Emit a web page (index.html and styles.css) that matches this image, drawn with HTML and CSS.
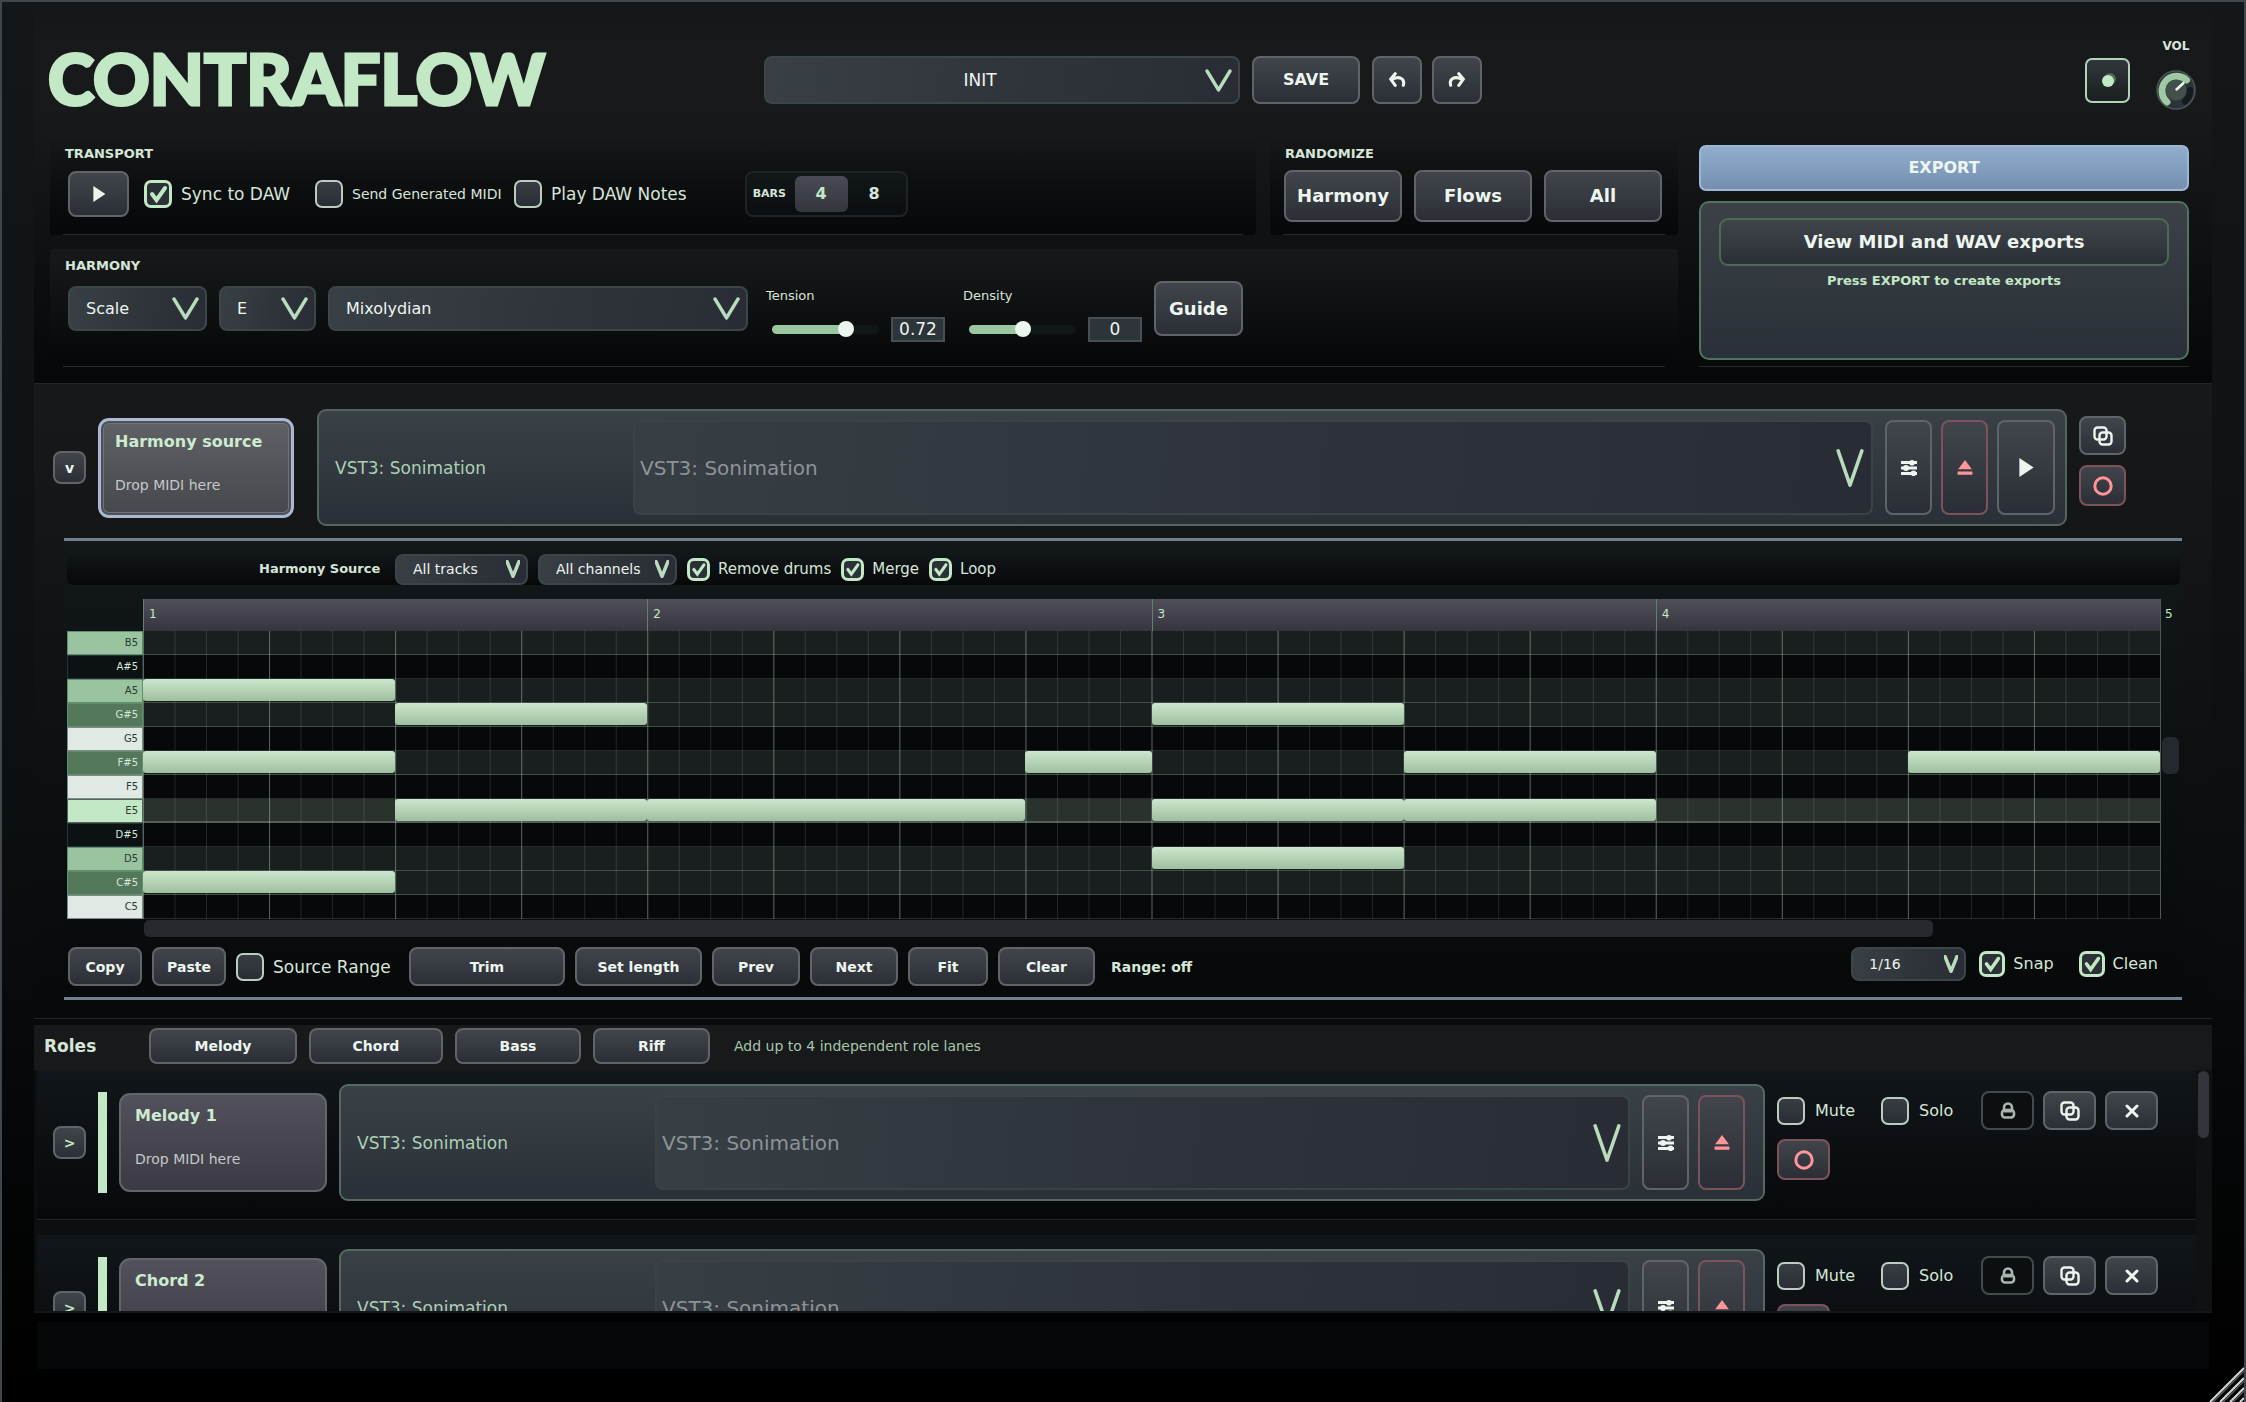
FILE: index.html
```html
<!DOCTYPE html>
<html lang="en">
<head>
<meta charset="utf-8">
<title>Contraflow</title>
<link rel="stylesheet" href="styles.css">
</head>
<body>
<svg class="sprite" aria-hidden="true">
  <symbol id="chevron" viewBox="0 0 26 22" preserveAspectRatio="none"><path d="M2 2L13 20L24 2" fill="none" stroke="#b9dcbd" stroke-width="3.500" stroke-linecap="round" stroke-linejoin="round" vector-effect="non-scaling-stroke"/></symbol>
  <symbol id="play" viewBox="0 0 20 20"><path d="M3 0L18 10L3 20Z" fill="#edf5ef"/></symbol>
  <symbol id="undo" viewBox="0 0 20 20"><path d="M17 16C19 9 13 5 5 9M8 3L3 9L8 16" fill="none" stroke="#edf5ef" stroke-width="3.400" stroke-linecap="round"/></symbol>
  <symbol id="redo" viewBox="0 0 20 20"><path d="M3 16C1 9 7 5 15 9M12 3L17 9L12 16" fill="none" stroke="#edf5ef" stroke-width="3.400" stroke-linecap="round"/></symbol>
  <symbol id="sliders" viewBox="0 0 16 16"><g fill="#edf5ef"><path d="M0 1h16v3H0zM0 6.500h16v3H0zM0 12h16v3H0z"/><circle cx="11" cy="2.800" r="2.800"/><circle cx="5" cy="8" r="3"/><circle cx="12.500" cy="13.200" r="2.800"/></g></symbol>
  <symbol id="eject" viewBox="0 0 14 14"><path d="M7 0L13 8H1ZM0.500 10h13v3H0.500z" fill="#ff9499"/></symbol>
  <symbol id="copy" viewBox="0 0 20 20"><g fill="none" stroke="#edf5ef" stroke-width="2.400"><rect x="1.500" y="1.500" width="12" height="12" rx="3"/><rect x="6.500" y="6.500" width="12" height="12" rx="3"/></g></symbol>
  <symbol id="record" viewBox="0 0 20 20"><circle cx="10" cy="10" r="8.200" fill="none" stroke="#ff9499" stroke-width="3"/></symbol>
  <symbol id="lock" viewBox="0 0 16 18"><g fill="none" stroke="#a9b7ae" stroke-width="2.600"><path d="M4 8V5.500a4 4 0 0 1 8 0V8"/><rect x="2" y="8" width="12" height="7.500" rx="3"/></g><path d="M4 9h8" stroke="#a9b7ae" stroke-width="3"/></symbol>
  <symbol id="close" viewBox="0 0 14 14"><path d="M2 2L12 12M12 2L2 12" stroke="#edf5ef" stroke-width="3" stroke-linecap="round"/></symbol>
</svg>

<div class="app">
  <header class="top">
    <div class="topbar">
      <h1 class="logo">CONTRAFLOW</h1>
      <div class="presets">
        <div class="select select-preset"><select aria-label="Preset"><option>INIT</option></select><svg><use href="#chevron"/></svg></div>
        <button class="btn btn-save">SAVE</button>
        <button class="btn btn-history" aria-label="Undo"><svg><use href="#undo"/></svg></button>
        <button class="btn btn-history" aria-label="Redo"><svg><use href="#redo"/></svg></button>
      </div>
      <div class="output">
        <button class="activity" aria-label="MIDI activity"><span></span></button>
        <div class="volume">
          <span>VOL</span>
          <svg viewBox="0 0 40 40" role="img" aria-label="Volume">
            <circle cx="20" cy="20" r="19" fill="#2b3238" stroke="#4b5659" stroke-width="1.500"/>
            <path d="M11 32A14.500 14.500 0 1 1 30.500 10" fill="none" stroke="#9ecaa3" stroke-width="7" stroke-linecap="round"/>
            <path d="M29 31.500A14.500 14.500 0 0 0 34 20" fill="none" stroke="#121b1d" stroke-width="6" stroke-linecap="round"/>
            <circle cx="20" cy="20" r="10.500" fill="#41504b"/>
            <path d="M20.500 19.500L27.500 13" stroke="#edf5ef" stroke-width="2.500" stroke-linecap="round"/>
          </svg>
        </div>
      </div>
    </div>

    <div class="deck">
      <section class="panel transport">
        <h2>TRANSPORT</h2>
        <div class="row">
          <button class="btn btn-play" aria-label="Play"><svg><use href="#play"/></svg></button>
          <label class="check check-sync"><input type="checkbox" checked>Sync to DAW</label>
          <label class="check check-send"><input type="checkbox"><span class="small">Send Generated MIDI</span></label>
          <label class="check"><input type="checkbox">Play DAW Notes</label>
          <div class="bars"><span>BARS</span><button class="on">4</button><button>8</button></div>
        </div>
      </section>
      <section class="panel randomize">
        <h2>RANDOMIZE</h2>
        <div class="row">
          <button class="btn btn-big">Harmony</button>
          <button class="btn btn-big">Flows</button>
          <button class="btn btn-big">All</button>
        </div>
      </section>
      <section class="panel harmony">
        <h2>HARMONY</h2>
        <div class="row">
          <div class="select select-mode"><select aria-label="Mode"><option>Scale</option></select><svg><use href="#chevron"/></svg></div>
          <div class="select select-key"><select aria-label="Key"><option>E</option></select><svg><use href="#chevron"/></svg></div>
          <div class="select select-scale"><select aria-label="Scale"><option>Mixolydian</option></select><svg><use href="#chevron"/></svg></div>
          <div class="dial"><label for="tension">Tension</label><div><input id="tension" class="tension" type="range" min="0" max="1" step="0.01" value="0.72"><input type="text" aria-label="Tension value" value="0.72"></div></div>
          <div class="dial"><label for="density">Density</label><div><input id="density" class="density" type="range" min="-1" max="1" step="0.01" value="0"><input type="text" aria-label="Density value" value="0"></div></div>
          <button class="btn btn-guide">Guide</button>
        </div>
      </section>
      <section class="export">
        <button class="btn-export">EXPORT</button>
        <div class="export-box">
          <button class="btn btn-view">View MIDI and WAV exports</button>
          <p>Press EXPORT to create exports</p>
        </div>
      </section>
    </div>
  </header>

  <section class="source">
    <div class="source-row">
      <button class="btn btn-expand" aria-label="Collapse">v</button>
      <div class="card card-active"><h3>Harmony source</h3><p>Drop MIDI here</p></div>
      <div class="plugin">
        <span class="plugin-name">VST3: Sonimation</span>
        <div class="select select-plugin"><select aria-label="Harmony plugin"><option>VST3: Sonimation</option></select><svg><use href="#chevron"/></svg></div>
        <button class="btn btn-tall" aria-label="Plugin settings"><svg><use href="#sliders"/></svg></button>
        <button class="btn btn-tall btn-red" aria-label="Eject"><svg><use href="#eject"/></svg></button>
        <button class="btn btn-tall btn-preview" aria-label="Preview"><svg><use href="#play"/></svg></button>
      </div>
      <div class="source-actions">
        <button class="btn" aria-label="Duplicate"><svg><use href="#copy"/></svg></button>
        <button class="btn btn-red" aria-label="Record"><svg><use href="#record"/></svg></button>
      </div>
    </div>

    <div class="editor">
      <div class="filters">
        <strong>Harmony Source</strong>
        <div class="select select-tracks"><select aria-label="Tracks"><option>All tracks</option></select><svg><use href="#chevron"/></svg></div>
        <div class="select select-channels"><select aria-label="Channels"><option>All channels</option></select><svg><use href="#chevron"/></svg></div>
        <label class="check"><input type="checkbox" checked>Remove drums</label>
        <label class="check"><input type="checkbox" checked>Merge</label>
        <label class="check"><input type="checkbox" checked>Loop</label>
      </div>

      <div class="roll">
        <div class="ruler"><span>1</span><span>2</span><span>3</span><span>4</span></div>
        <span class="ruler-end">5</span>
        <ol class="keys">
          <li class="scale">B5</li><li class="black">A#5</li><li class="scale">A5</li><li class="sharp">G#5</li>
          <li>G5</li><li class="sharp">F#5</li><li>F5</li><li class="root">E5</li>
          <li class="black">D#5</li><li class="scale">D5</li><li class="sharp">C#5</li><li>C5</li>
        </ol>
        <div class="lanes-bg">
          <i class="in"></i><i></i><i class="in"></i><i class="in"></i><i></i><i class="in"></i><i></i><i class="tonic"></i><i></i><i class="in"></i><i class="in"></i><i></i>
        </div>
        <div class="notes">
          <b style="grid-area:3/1/4/9"></b>
          <b style="grid-area:6/1/7/9"></b>
          <b style="grid-area:11/1/12/9"></b>
          <b style="grid-area:4/9/5/17"></b>
          <b style="grid-area:8/9/9/17"></b>
          <b style="grid-area:8/17/9/29"></b>
          <b style="grid-area:6/29/7/33"></b>
          <b style="grid-area:4/33/5/41"></b>
          <b style="grid-area:8/33/9/41"></b>
          <b style="grid-area:10/33/11/41"></b>
          <b style="grid-area:6/41/7/49"></b>
          <b style="grid-area:8/41/9/49"></b>
          <b style="grid-area:6/57/7/65"></b>
        </div>
        <div class="vscroll"><span></span></div>
        <div class="hscroll"><span></span></div>
      </div>

      <div class="tools">
        <button class="btn btn-copy">Copy</button>
        <button class="btn btn-copy">Paste</button>
        <label class="check check-range"><input type="checkbox">Source Range</label>
        <button class="btn btn-trim">Trim</button>
        <button class="btn btn-length">Set length</button>
        <button class="btn btn-step">Prev</button>
        <button class="btn btn-step">Next</button>
        <button class="btn btn-fit">Fit</button>
        <button class="btn btn-clear">Clear</button>
        <strong>Range: off</strong>
        <div class="snap">
          <div class="select select-grid"><select aria-label="Grid"><option>1/16</option></select><svg><use href="#chevron"/></svg></div>
          <label class="check"><input type="checkbox" checked>Snap</label>
          <label class="check"><input type="checkbox" checked>Clean</label>
        </div>
      </div>
    </div>
  </section>

  <section class="roles">
    <div class="roles-head">
      <h2>Roles</h2>
      <button class="btn btn-melody">Melody</button>
      <button class="btn btn-chord">Chord</button>
      <button class="btn btn-bass">Bass</button>
      <button class="btn btn-riff">Riff</button>
      <p>Add up to 4 independent role lanes</p>
    </div>
    <div class="roles-body">
      <div class="lanes">
        <article class="lane">
          <button class="btn btn-expand" aria-label="Expand">&gt;</button>
          <span class="stripe"></span>
          <div class="card"><h3>Melody 1</h3><p>Drop MIDI here</p></div>
          <div class="plugin">
            <span class="plugin-name">VST3: Sonimation</span>
            <div class="select select-plugin"><select aria-label="Melody plugin"><option>VST3: Sonimation</option></select><svg><use href="#chevron"/></svg></div>
            <button class="btn btn-tall" aria-label="Plugin settings"><svg><use href="#sliders"/></svg></button>
            <button class="btn btn-tall btn-red" aria-label="Eject"><svg><use href="#eject"/></svg></button>
          </div>
          <div class="lane-actions">
            <label class="check"><input type="checkbox">Mute</label>
            <label class="check"><input type="checkbox">Solo</label>
            <button class="btn btn-lock" aria-label="Lock"><svg><use href="#lock"/></svg></button>
            <button class="btn" aria-label="Duplicate"><svg><use href="#copy"/></svg></button>
            <button class="btn" aria-label="Remove"><svg class="x"><use href="#close"/></svg></button>
            <button class="btn btn-red btn-record" aria-label="Record"><svg><use href="#record"/></svg></button>
          </div>
        </article>
        <article class="lane">
          <button class="btn btn-expand" aria-label="Expand">&gt;</button>
          <span class="stripe"></span>
          <div class="card"><h3>Chord 2</h3></div>
          <div class="plugin">
            <span class="plugin-name">VST3: Sonimation</span>
            <div class="select select-plugin"><select aria-label="Chord plugin"><option>VST3: Sonimation</option></select><svg><use href="#chevron"/></svg></div>
            <button class="btn btn-tall" aria-label="Plugin settings"><svg><use href="#sliders"/></svg></button>
            <button class="btn btn-tall btn-red" aria-label="Eject"><svg><use href="#eject"/></svg></button>
          </div>
          <div class="lane-actions">
            <label class="check"><input type="checkbox">Mute</label>
            <label class="check"><input type="checkbox">Solo</label>
            <button class="btn btn-lock" aria-label="Lock"><svg><use href="#lock"/></svg></button>
            <button class="btn" aria-label="Duplicate"><svg><use href="#copy"/></svg></button>
            <button class="btn" aria-label="Remove"><svg class="x"><use href="#close"/></svg></button>
            <button class="btn btn-red btn-record" aria-label="Record"><svg><use href="#record"/></svg></button>
          </div>
        </article>
      </div>
      <div class="lane-scroll"><span></span></div>
    </div>
  </section>
  <footer class="status"></footer>
  <svg class="grip" viewBox="0 0 36 36" aria-hidden="true"><path d="M2 36L36 2M12 36L36 12M22 36L36 22M32 36L36 32" stroke="#d5d8d8" stroke-width="2"/><path d="M4 37L37 4M14 37L37 14M24 37L37 24" stroke="#5a5d5e" stroke-width="1.500"/></svg>
</div>
</body>
</html>
```
FILE: styles.css
```css
* { box-sizing: border-box; }

:root {
  --text: #edf5ef;
  --soft: #d5e6d8;
  --mint: #c3e8c5;
  --btn: linear-gradient(#42464c, #2a2d35);
}

body {
  margin: 0;
  background: #000;
  color: var(--soft);
  font: 16px/20px "DejaVu Sans", Verdana, sans-serif;
}

h1, h2, h3, p, ol { margin: 0; padding: 0; }
button, input, select { font: inherit; color: inherit; margin: 0; }
.sprite { display: none; }

.app {
  position: relative;
  display: flex;
  flex-direction: column;
  height: 100vh;
  min-height: 1200px;
  padding: 0 32px;
  overflow: hidden;
  border: 2px solid #3d474d;
  border-bottom: 0;
  background: linear-gradient(#141719, #0d1012 55%, #000 98%);
}

/* Buttons */
.btn {
  display: flex;
  flex: none;
  align-items: center;
  justify-content: center;
  padding: 0;
  border: 2px solid #5f6468;
  border-radius: 8px;
  background: var(--btn) border-box;
  color: var(--text);
  font-size: 14px;
  font-weight: bold;
}
.btn svg { width: 20px; height: 20px; }
.btn-red { border-color: #7c535b; }

/* Drop-downs: the arrow shares the select's grid cell */
.select { display: grid; flex: none; }
.select > * { grid-area: 1 / 1; }
.select select {
  width: 100%;
  height: 100%;
  padding: 0 16px;
  appearance: none;
  border: 2px solid #3b4649;
  border-radius: 8px;
  background: linear-gradient(100deg, #394045, #2f343b 55%, #292c34) border-box;
  color: var(--text);
}
.select svg {
  align-self: center;
  justify-self: end;
  width: 27px;
  height: 23px;
  margin-right: 8px;
  pointer-events: none;
}

/* Tick boxes */
.check { display: flex; align-items: center; gap: 10px; color: var(--soft); white-space: nowrap; }
.check input {
  width: 28px;
  height: 28px;
  flex: none;
  appearance: none;
  border: 2px solid #bacdc0;
  border-radius: 7px;
  background: linear-gradient(#383d44, #2a2d35);
}
.check input:checked {
  border: 3px solid var(--mint);
  background: url("data:image/svg+xml,%3Csvg xmlns='http://www.w3.org/2000/svg' viewBox='0 0 22 22'%3E%3Cpath d='M5 11l4.500 6L18 5' fill='none' stroke='%23c3e8c5' stroke-width='4' stroke-linecap='round'/%3E%3C/svg%3E") center / 100% no-repeat, #2c3138;
}

/* Header */
.top {
  flex: none;
  padding: 0 23px 16px 16px;
  background: linear-gradient(#141719, #17191b 10%, #17191b 30%, #060709);
  border-bottom: 1px solid #222628;
}
.topbar {
  display: grid;
  grid-template-columns: 1fr auto 1fr;
  align-items: start;
  height: 135px;
  margin-right: -7px;
}
.logo {
  margin: 36px 0 0 -2px;
  color: var(--mint);
  font: 900 70px/80px Lato, sans-serif;
  -webkit-text-stroke: 3px var(--mint);
}
.presets { display: flex; gap: 12px; padding-top: 54px; }
.select-preset { width: 476px; height: 48px; }
.select-preset select { padding-right: 60px; font-size: 17px; text-align-last: center; }
.btn-save { width: 108px; font-size: 16px; }
.btn-history { width: 50px; }
.btn-history + .btn-history { margin-left: -2px; }
.btn-history svg { width: 18px; height: 18px; }

.output { display: flex; justify-content: flex-end; gap: 26px; padding-top: 34px; }
.activity {
  display: grid;
  place-items: center;
  width: 45px;
  height: 45px;
  margin-top: 22px;
  border: 2px solid #b3d2b7;
  border-radius: 7px;
  background: linear-gradient(#30363a, #1a2021);
}
.activity span { width: 12px; height: 12px; border-radius: 50%; background: var(--mint); box-shadow: 2px -2px 0 #56655b; }
.volume { display: flex; flex-direction: column; align-items: center; gap: 14px; font-size: 12px; font-weight: bold; line-height: 20px; }
.volume svg { width: 40px; height: 40px; }

.deck {
  display: grid;
  grid-template-columns: 1fr 408px 497px;
  gap: 14px;
}
.panel { border-radius: 4px; padding: 9px 13px 0; }
.panel::after, .export::after { content: ""; display: block; height: 1px; background: #272b2d; margin-top: auto; }
.panel h2 { margin-left: 2px; font-size: 13px; line-height: 16px; color: var(--soft); }
.panel, .export { display: flex; flex-direction: column; }
.row { display: flex; align-items: flex-start; }
.transport, .randomize { height: 98px; background: linear-gradient(#0e101100, #07080a); }
.transport .row { margin-top: 9px; }
.randomize .row { margin-top: 8px; }
.harmony { grid-column: 1 / 3; height: 118px; background: linear-gradient(#17191b, #060709); }
.export { grid-area: 1 / 3 / 3 / 4; margin-left: 7px; padding-top: 8px; }

.transport .row { align-items: center; height: 46px; padding-left: 5px; }
.transport .check { height: 46px; gap: 9px; font-size: 17px; }
.btn-play { width: 61px; height: 46px; margin-right: 15px; }
.btn-play svg { width: 16px; height: 16px; }
.check-sync { width: 171px; }
.check-send { width: 199px; }
.transport .small { font-size: 14px; }
.bars {
  display: flex;
  align-items: center;
  height: 46px;
  width: 163px;
  margin-left: 58px;
  padding: 0 5px 0 6px;
  border: 2px solid #1d2427;
  border-radius: 8px;
  background: linear-gradient(#12171a, #0b0e11);
  font-size: 11px;
  font-weight: bold;
}
.bars span { flex: 1; }
.bars button { width: 53px; height: 36px; padding: 0; border: 0; border-radius: 6px; background: none; font-size: 16px; }
.bars .on { background: linear-gradient(#484a54, #34363e); color: var(--mint); }

.randomize .row { gap: 12px; padding-left: 1px; }
.btn-big { width: 118px; height: 52px; font-size: 18px; }

.harmony .row { align-items: center; height: 65px; margin-top: 2px; padding-left: 5px; gap: 12px; }
.select-mode, .select-key, .select-scale { height: 45px; }
.select-mode { width: 139px; }
.select-key { width: 97px; }
.select-scale { width: 420px; }
.dial { width: 185px; padding: 12px 0 0 6px; font-size: 13px; line-height: 16px; }
.dial div { display: flex; align-items: center; justify-content: space-between; margin-top: 13px; padding-left: 6px; }
.dial input[type="text"] { width: 54px; height: 25px; padding: 0; border: 2px solid #465054; background: #2d343a; color: var(--text); font-size: 17px; text-align: center; }
.dial input[type="range"] { width: 107px; height: 17px; appearance: none; background: none; }
.dial input::-webkit-slider-runnable-track { height: 9px; border-radius: 5px; }
.tension::-webkit-slider-runnable-track { background: linear-gradient(90deg, #9ac79f 70%, #101718 70%); }
.density::-webkit-slider-runnable-track { background: linear-gradient(90deg, #9ac79f 50%, #101718 50%); }
.dial input::-webkit-slider-thumb { width: 16px; height: 16px; margin-top: -4px; appearance: none; border-radius: 50%; background: var(--text); }
.btn-guide { width: 89px; height: 55px; font-size: 18px; }

.btn-export { height: 46px; padding: 0; border: 2px solid #9db7d3; border-radius: 7px; background: linear-gradient(#93afd0, #728dac) border-box; color: var(--text); font-weight: bold; }
.export-box {
  height: 159px;
  margin-top: 10px;
  padding: 15px 18px;
  border: 2px solid #52745d;
  border-radius: 10px;
  background: linear-gradient(#3b4147, #2a3037);
  text-align: center;
}
.btn-view { width: 100%; height: 48px; border-color: #4a6a55; border-radius: 9px; font-size: 18px; }
.export-box p { margin-top: 7px; color: var(--mint); font-size: 13px; font-weight: bold; line-height: 16px; }

/* Cards and plugin strips */
.card {
  flex: none;
  width: 208px;
  height: 99px;
  padding: 11px 14px;
  border: 2px solid #5e6869;
  border-radius: 11px;
  background: linear-gradient(#53525c, #3b3a44) border-box;
}
.card h3 { color: #cdebd0; font-size: 16px; line-height: 20px; }
.card p { margin-top: 23px; color: #c5c8ca; font-size: 14px; line-height: 20px; }
.card-active { width: 196px; height: 100px; border: 3px solid #a9b9d3; background: linear-gradient(#5f6166, #46484c); box-shadow: inset 0 0 0 2px #4d5157, inset 0 0 0 3px #6f7277; }

.plugin {
  display: flex;
  flex: 1;
  align-items: center;
  height: 117px;
  padding: 0 10px 0 16px;
  border: 2px solid #52645f;
  border-radius: 9px;
  background: linear-gradient(#394147, #2a3037);
}
.plugin-name { width: 298px; flex: none; color: #aecfb4; font-size: 17px; }
.select-plugin { flex: 1; height: 95px; }
.select-plugin select { padding: 0 5px; border-color: #3a4346; background: linear-gradient(95deg, #373e44, #2e333b 55%, #292c34); color: #8d9497; font-size: 20px; }
.select-plugin svg { width: 28px; height: 42px; margin-right: 9px; }
.btn-tall { width: 47px; height: 95px; margin-left: 9px; }
.select + .btn-tall { margin-left: 12px; }
.btn-tall svg { width: 16px; height: 16px; }
.btn-tall.btn-preview { width: 58px; }
.btn-preview svg { width: 20px; height: 19px; }
.btn-expand { width: 33px; height: 33px; color: var(--mint); }

/* Harmony source */
.source { flex: none; padding-bottom: 18px; border-bottom: 1px solid #222628; background: linear-gradient(#17191a, #07090b); }
.source-row { display: flex; align-items: center; padding: 25px 86px 12px 19px; }
.source-row .btn-expand { margin-right: 12px; color: var(--text); }
.source-row .plugin { margin: 0 12px 0 23px; }
.source-actions { display: flex; flex-direction: column; gap: 10px; align-self: flex-start; margin-top: 7px; }
.source-actions .btn { width: 47px; height: 39px; }
.source-actions .btn-red { height: 41px; }

.editor { margin: 0 30px; padding: 12px 2px 11px 3px; border: solid #71808f; border-width: 3px 0; background: linear-gradient(#12171a, #07090b); }
.filters { display: flex; align-items: center; height: 32px; padding-left: 192px; background: linear-gradient(#10141600, #07080a); border-radius: 6px; font-size: 15px; }
.filters strong { width: 136px; color: var(--soft); font-size: 13px; }
.filters .select { height: 31px; font-size: 14px; }
.filters .select svg, .select-grid svg { width: 14px; height: 18px; }
.select-tracks { width: 133px; margin-right: 10px; }
.select-channels { width: 139px; margin-right: 10px; }
.filters .check { gap: 8px; margin-right: 10px; }
.filters .check input { width: 23px; height: 23px; }

.roll { display: grid; grid-template: 32px 288px 18px / 76px 1fr 19px; margin-top: 14px; }
.ruler { grid-area: 1 / 2; display: grid; grid-template-columns: repeat(4, 1fr); border-right: 1px solid #4a5b50; background: linear-gradient(#50505a, #36353f); color: var(--mint); font-size: 12px; line-height: 30px; }
.ruler span { padding-left: 5px; border-left: 1px solid #65806c; }
.ruler-end { grid-area: 1 / 3; padding-left: 4px; color: var(--mint); font-size: 12px; line-height: 30px; }
.keys { grid-area: 2 / 1; list-style: none; color: #2c3a33; font-size: 10px; line-height: 22px; text-align: right; }
.keys li { height: 24px; padding-right: 4px; border: 1px solid #7d8c86; background: #e0e9e3; }
.keys .scale { border-color: #5f9069; background: #9ac3a0; }
.keys .sharp { border-color: #5f9069; background: #54785b; color: var(--soft); }
.keys .black { border-color: #28323a; background: #0c1214; color: var(--soft); }
.keys .root { border-color: #53655b; background: var(--mint); }
.lanes-bg { grid-area: 2 / 2; }
.lanes-bg i { display: block; height: 24px; border-bottom: 1px solid #252d2a; background: #06080a; }
.lanes-bg .in { border-color: #404e47; background: #191f1e; }
.lanes-bg .tonic { border-bottom: 2px solid #51615a; background: #2a322e; }
.notes {
  grid-area: 2 / 2;
  display: grid;
  grid-template: repeat(12, 24px) / repeat(64, minmax(0, 1fr));
  border-right: 1px solid #4a5b50;
  background:
    linear-gradient(90deg, #a8cbae60 1px, #0000 1px) 0 0 / 6.25% 100%,
    linear-gradient(90deg, #a8cbae2a 1px, #0000 1px) 0 0 / 1.5625% 100%;
}
.notes b { height: 22px; border-radius: 3px; background: linear-gradient(#cbe7cd, #9fbf9f); }
.vscroll { grid-area: 2 / 3; padding: 106px 1px 0; }
.vscroll span { display: block; height: 37px; border-radius: 6px; background: #25292e; }
.hscroll { grid-area: 3 / 2; padding: 1px 0 0 1px; }
.hscroll span { display: block; width: 88.7%; height: 17px; border-radius: 5px; background: #25292d; }

.tools { display: flex; align-items: center; gap: 10px; margin-top: 10px; padding-left: 1px; background: linear-gradient(#10151700, #08090b); }
.tools .btn { height: 39px; }
.btn-copy { width: 74px; }
.check-range { width: 163px; font-size: 17px; gap: 9px; }
.btn-trim { width: 156px; }
.btn-length { width: 127px; }
.btn-step { width: 88px; }
.btn-fit { width: 80px; }
.btn-clear { width: 97px; }
.tools strong { margin-left: 6px; font-size: 14px; }
.snap { display: flex; align-self: flex-start; gap: 13px; margin: 0 22px 0 auto; }
.select-grid { width: 115px; height: 34px; font-size: 14px; }
.snap .check { height: 34px; gap: 8px; font-size: 16px; }
.snap .check + .check { margin-left: 12px; }
.snap .check input { width: 26px; height: 26px; }

/* Role lanes */
.roles { display: flex; flex: 1; flex-direction: column; min-height: 0; margin-top: 6px; border-bottom: 2px solid #15181a; background: #0c0e10; }
.roles-head { display: flex; flex: none; align-items: center; height: 45px; padding: 0 0 4px 10px; background: #17191a; }
.roles-head h2 { width: 105px; font-size: 17px; }
.roles-head .btn { height: 36px; margin-right: 12px; }
.btn-melody { width: 148px; }
.btn-chord { width: 134px; }
.btn-bass { width: 126px; }
.btn-riff { width: 117px; }
.roles-head p { margin-left: 12px; color: #a9c5ae; font-size: 14px; }
.roles-body { display: flex; flex: 1; min-height: 0; padding-left: 3px; }
.lanes { flex: 1; overflow: hidden; }
.lane { display: flex; align-items: center; height: 150px; margin-bottom: 15px; padding: 0 39px 4px 16px; border-bottom: 1px solid #202426; background: linear-gradient(#11161a, #07090b); }
.stripe { width: 9px; height: 101px; margin: 0 12px; background: var(--mint); }
.lane .plugin { margin: 0 12px; padding-right: 18px; border-color: #54695f; }
.lane-actions { display: grid; grid-template-columns: 104px 100px 62px 62px 52px; row-gap: 9px; align-self: flex-start; margin-top: 21px; }
.lane-actions .btn { width: 53px; height: 39px; }
.lane-actions .btn-record { height: 41px; }
.lane-actions .x { width: 14px; height: 14px; }
.btn-lock { border-color: #444a4c; background: #0c0f11; }
.lane-actions .btn-lock svg { width: 16px; height: 18px; }
.lane-scroll { width: 16px; padding: 1px 3px 0 2px; background: #0f1113; }
.lane-scroll span { display: block; height: 67px; border-radius: 6px; background: #33343c; }

.status { flex: none; height: 47px; margin: 9px 3px 33px; background: #060709; }
.grip { position: absolute; right: 0; bottom: 0; width: 36px; height: 36px; }
```
